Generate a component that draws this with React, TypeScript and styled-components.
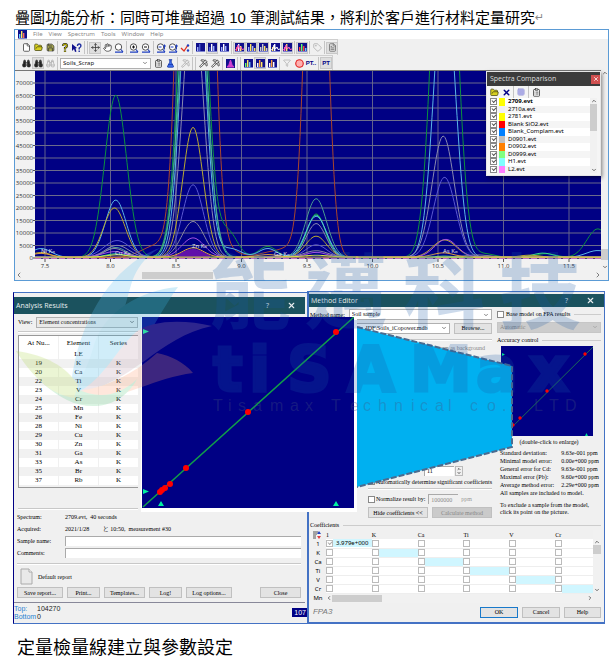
import React from "react";
import styled, { createGlobalStyle, css } from "styled-components";
import {
  File, FolderOpen, Save, Move, Hand, Binoculars,
  FlaskConical, FileText, Pickaxe, X, ChevronDown, ChevronUp,
  ChevronLeft, ChevronRight, ClipboardList, Filter, Ban, Tag, Grid3x3,
} from "lucide-react";

const NAVY = "#000084";
const UI = '"Noto Sans", "Open Sans", sans-serif';
const SERIF = '"Liberation Serif", "Noto Sans CJK TC", serif';
const CJK = '"Noto Sans CJK TC", sans-serif';

const GlobalStyle = createGlobalStyle`
  * { box-sizing: border-box; }
  body { margin: 0; background: #fff; color: #000; font-family: ${UI}; }
  button, input, select { font: inherit; color: inherit; margin: 0; }
  svg { display: block; flex: none; }
`;

const Page = styled.main`
  position: relative;
  overflow: hidden;
`;

const Heading = styled.h1`
  display: flex;
  height: 29px;
  margin: 0;
  padding: 8px 0 0 15px;
  font: 400 15px/20px "Liberation Sans", ${CJK};
  white-space: nowrap;
`;

const Return = styled.span`
  color: #888;
  font: 11px/20px "DejaVu Sans", sans-serif;
`;

const Caption = styled.p`
  margin: 0;
  padding: 11px 0 3px 17px;
  font: 400 18px/26px "Liberation Sans", ${CJK};
  white-space: nowrap;
`;

/* ---------- spectrum window ---------- */

const SpectrumWindow = styled.section`
  position: relative;
  margin: 0 5px 0 14px;
  border: 1px solid #5b9bd5;
  background: #f0f0f0;
`;

const MenuBar = styled.nav`
  display: flex;
  align-items: center;
  gap: 6px;
  height: 9px;
  padding-left: 3px;
  background: #fff;
`;

const MenuItem = styled.a`
  color: #888;
  font-size: 6px;
  line-height: 9px;
  text-decoration: none;
`;

const Toolbar = styled.div<{ $tall?: boolean; $end: number }>`
  display: flex;
  align-items: center;
  height: ${(p) => (p.$tall ? 16 : 15)}px;
  width: ${(p) => p.$end}px;
  padding-left: 5px;
  border: solid #cfcfcf;
  border-width: 1px 1px 0 0;
`;

const Tool = styled.button<{ $on?: boolean; $muted?: boolean }>`
  display: flex;
  align-items: center;
  justify-content: center;
  flex: none;
  width: 12px;
  height: 12px;
  padding: 0;
  border: 1px solid ${(p) => (p.$on ? "#c8c8c8" : "transparent")};
  background: ${(p) => (p.$on ? "#dedede" : "transparent")};
  color: ${(p) => (p.$muted ? "#aaa" : "#333")};
  font: 700 6px/8px "Liberation Sans", sans-serif;
`;

const Divider = styled.span<{ $double?: boolean }>`
  flex: none;
  width: ${(p) => (p.$double ? 4 : 1)}px;
  height: 13px;
  margin: 0 1px;
  border: solid #c4c4c4;
  border-width: 0 ${(p) => (p.$double ? 1 : 0)}px 0 1px;
`;

const Picker = styled.span<{ $disabled?: boolean; $grow?: boolean; $width?: number; $flat?: boolean }>`
  display: flex;
  align-items: center;
  ${(p) => (p.$grow ? "flex: 1;" : `flex: none; width: ${p.$width}px;`)}
  min-width: 0;
  height: 11px;
  padding: 0 2px;
  border: 1px solid ${(p) => (p.$disabled ? "#c6c6c6" : "#b0b0b0")};
  background: ${(p) => (p.$disabled ? "#cccccc" : p.$flat ? "#e9e9e9" : "#fff")};
  color: ${(p) => (p.$disabled ? "#888" : "#111")};
`;

const ScrapPicker = styled(Picker)`
  margin: 0 1px;
  font-size: 6px;
`;

const Select = styled.select`
  appearance: none;
  flex: 1;
  min-width: 0;
  padding: 0;
  border: 0;
  background: transparent;
  line-height: 9px;
  opacity: 1;
`;

const ChartRow = styled.div`
  display: flex;
`;

const ChartArea = styled.div`
  flex: 1;
  svg { width: 100%; height: auto; }
`;

const Scrollbar = styled.div<{ $dir: "v" | "h"; $size?: number }>`
  display: flex;
  flex-direction: ${(p) => (p.$dir === "v" ? "column" : "row")};
  align-items: center;
  justify-content: space-between;
  flex: none;
  background: #f1f1f1;
  color: #444;
  ${(p) => (p.$dir === "v" ? `width: ${p.$size ?? 7}px;` : `height: ${p.$size ?? 10}px;`)}
`;

const Thumb = styled.span<{ $before: number; $length: number; $dir: "v" | "h" }>`
  background: #cdcdcd;
  ${(p) =>
    p.$dir === "v"
      ? css`width: 100%; height: ${p.$length}px; margin: ${p.$before}px 0 auto;`
      : css`height: 7px; width: ${p.$length}px; margin: 0 auto 0 ${p.$before}px;`}
`;

/* ---------- comparison palette ---------- */

const Palette = styled.aside`
  position: absolute;
  top: 41px;
  right: 7px;
  width: 115px;
  padding-bottom: 2px;
  border: 1px solid #e6e6e6;
  background: #f5f5f5;
  box-shadow: 1px 2px 4px rgba(0, 0, 0, 0.5);
`;

const PaletteTitle = styled.header`
  display: flex;
  align-items: center;
  justify-content: space-between;
  height: 14px;
  padding-left: 3px;
  background: #3b3b3b;
  color: #ddd;
  font: 7px/12px "Open Sans", sans-serif;
`;

const CloseButton = styled.button`
  display: grid;
  place-items: center;
  width: 9px;
  height: 9px;
  padding: 0;
  border: 0;
  background: #d05050;
  color: #fff;
`;

const PaletteTools = styled.div`
  display: flex;
  align-items: center;
  height: 12px;
  padding-left: 1px;
`;

const PaletteBody = styled.div`
  display: flex;
  height: 75px;
  padding: 0 3px;
`;

const PaletteList = styled.ul`
  display: grid;
  grid-auto-rows: 1fr;
  flex: 1;
  margin: 0;
  padding: 0;
  list-style: none;
`;

const PaletteItem = styled.li<{ $bold?: boolean }>`
  label {
    display: flex;
    align-items: center;
    gap: 2px;
    height: 100%;
    font-size: 6px;
    line-height: 7px;
    font-weight: ${(p) => (p.$bold ? 700 : 400)};
  }
  &:nth-child(odd) { background: #fff; }
`;

const Swatch = styled.span<{ $color: string }>`
  width: 6px;
  height: 100%;
  margin-right: 1px;
  background: ${(p) => p.$color};
`;

const CheckBox = styled.input.attrs({ type: "checkbox" })<{ $pale?: boolean }>`
  appearance: none;
  position: relative;
  flex: none;
  width: 7px;
  height: 7px;
  border: 1px solid ${(p) => (p.$pale ? "#bbb" : "#888")};
  background: #fff;
  &:checked::after {
    content: "";
    position: absolute;
    left: 1px;
    top: 0;
    width: 3px;
    height: 2px;
    border: solid ${(p) => (p.$pale ? "#aaa" : "#555")};
    border-width: 0 0 1px 1px;
    transform: rotate(-45deg);
  }
`;

/* ---------- dialogs ---------- */

const Figure = styled.section`
  position: relative;
  display: grid;
  grid-template-columns: 1fr 1fr;
  margin: 10px 9px 0 13px;
  font: 6px/8px ${SERIF};
`;

const LeftShot = styled.div`
  display: flex;
  flex-direction: column;
  margin-top: 1px;
  padding-top: 4px;
  border: solid #4472c4;
  border-width: 1px 0 1px 0;
  border-left: 1px solid ${NAVY};
  background: #f0f0f0;
`;

const TitleBar = styled.header<{ $height: number }>`
  display: flex;
  align-items: center;
  gap: 18px;
  height: ${(p) => p.$height}px;
  padding: 0 9px 0 2px;
  background: #1b525e;
  color: #e8eef0;
  font: 7px/12px "Open Sans", sans-serif;
`;

const DialogName = styled.span`
  flex: 1;
`;

const TitleButton = styled.button`
  display: grid;
  place-items: center;
  padding: 0;
  border: 0;
  background: none;
`;

const ResultsDialog = styled.div`
  margin-right: 2px;
  padding-bottom: 4px;
  border-bottom: 1px solid #889;
  background: #f0f0f0;
`;

const ResultsTop = styled.div`
  width: 124px;
  padding: 2px 0 0 4px;
`;

const Field = styled.div<{ $height: number; $gap?: number }>`
  display: flex;
  align-items: center;
  gap: ${(p) => p.$gap ?? 4}px;
  height: ${(p) => p.$height}px;
  white-space: nowrap;
`;

const Rule = styled.hr<{ $top: number; $bottom: number }>`
  height: 2px;
  margin: ${(p) => p.$top}px 0 ${(p) => p.$bottom}px;
  border: 0;
  border-top: 1px solid #c8c8c8;
  border-bottom: 1px solid #fff;
`;

const TableFrame = styled.div`
  height: 153px;
  overflow: hidden;
  border: 1px solid #999;
  border-right: 0;
  background: #fff;
`;

const ElementTable = styled.table`
  width: 100%;
  table-layout: fixed;
  border-collapse: collapse;
  font-size: 7px;
  line-height: 9px;
  text-align: center;
  th { height: 14px; padding: 0; font-weight: 400; }
  td { height: 9px; padding: 0; }
  th + th, td + td { border-left: 1px solid #f0f0f0; }
  tbody tr:nth-child(even) { background: #f1f1f1; }
`;

const ResultsBottom = styled.div`
  padding: 0 4px 0 3px;
`;

const FieldLabel = styled.label`
  width: 44px;
`;

const TextBox = styled.input<{ $width?: number; $muted?: boolean }>`
  ${(p) => (p.$width ? `width: ${p.$width}px;` : "flex: 1;")}
  min-width: 0;
  height: 10px;
  padding: 0 2px;
  border: solid #aaa;
  border-width: 1px 0 0 1px;
  background: ${(p) => (p.$muted ? "#f0f0f0" : "#fff")};
  color: ${(p) => (p.$muted ? "#888" : "#000")};
`;

const PushButton = styled.button<{ $width: number; $primary?: boolean; $off?: boolean }>`
  width: ${(p) => p.$width}px;
  height: 11px;
  padding: 0;
  border: 1px solid ${(p) => (p.$primary ? "#1979ca" : "#c0c0c0")};
  background: ${(p) => (p.$off ? "#cacaca" : "#e3e3e3")};
  color: ${(p) => (p.$off ? "#888" : "#000")};
  line-height: 8px;
`;

const Spacer = styled.span`
  flex: 1;
`;

const StatusStrip = styled.footer`
  display: flex;
  align-items: center;
  justify-content: space-between;
  flex: 1;
  color: #222;
  font: 7px/8px "Liberation Sans", sans-serif;
  dl { display: grid; grid-template-columns: 23px auto; margin: 0; }
  dt { color: #2a7fd0; }
  dd { margin: 0; }
`;

const Chip = styled.span`
  padding: 1px 1px 0 2px;
  background: ${NAVY};
  color: #fff;
`;

const EditorDialog = styled.div`
  padding-top: 2px;
  border: solid #4472c4;
  border-width: 1px 1px 2px 2px;
  background: #f0f0f0;
`;

const EditorColumns = styled.div`
  display: grid;
  grid-template-columns: 1fr 104px;
  gap: 5px;
  padding: 2px 3px 0 1px;
`;

const SideColumn = styled.div`
  padding-top: 1px;
`;

const Legend = styled.div`
  display: flex;
  align-items: center;
  gap: 2px;
  height: 8px;
  white-space: nowrap;
  &::after { content: ""; flex: 1; margin-left: 2px; border-top: 1px solid #ccc; }
`;

const CoveredArea = styled.div`
  height: 124px;
  padding: 3px 7px 0 0;
  color: #888;
  text-align: right;
`;

const Indented = styled.div`
  padding-left: 58px;
`;

const Spin = styled.div`
  display: grid;
  width: 8px;
  height: 10px;
  border: 1px solid #bbb;
  place-items: center;
`;

const AccuracyPlot = styled.div`
  margin: 2px 8px 0 4px;
  svg { width: 100%; height: auto; }
`;

const Centered = styled.p`
  margin: 2px 0 3px;
  text-align: center;
`;

const Stats = styled.table`
  width: 100%;
  margin-left: 3px;
  border-collapse: collapse;
  white-space: nowrap;
  td, th { height: 8px; padding: 0; font-weight: 400; text-align: left; }
`;

const Hint = styled.p`
  margin: 5px 0 0 3px;
  line-height: 7px;
  white-space: nowrap;
`;

const CoefficientPanel = styled.div`
  padding: 1px 3px 0 1px;
`;

const MatrixRow = styled.div`
  display: flex;
  align-items: flex-start;
  margin-top: 1px;
`;

const MatrixFrame = styled.div`
  flex: 1;
  overflow: hidden;
`;

const Matrix = styled.table`
  width: calc(100% + 8px);
  table-layout: fixed;
  border-collapse: collapse;
  th { height: 9px; padding: 0; font-weight: 400; text-align: left; }
  th:first-child { width: 16px; text-align: center; font-family: ${UI}; }
  td { height: 9px; padding: 0; background: #fff; border-bottom: 1px solid #eee; }
  label { display: flex; align-items: center; height: 8px; white-space: nowrap; }
  tbody th { line-height: 8px; }
`;

const MatrixScrollbar = styled(Scrollbar)`
  height: 63px;
  padding-top: 9px;
`;

const MatrixScroll = styled.div`
  position: relative;
  margin-top: -9px;
  padding: 0 8px 0 16px;
`;

const Value = styled.span<{ $on?: boolean }>`
  flex: 1;
  height: 8px;
  padding-left: 3px;
  background: ${(p) => (p.$on ? "#d0f6ff" : "transparent")};
  font: 6px/8px ${UI};
`;

const EditorFooter = styled.footer`
  display: flex;
  align-items: center;
  gap: 4px;
  padding: 4px 3px 4px 4px;
`;

const Brand = styled.em`
  flex: 1;
  color: #777;
  font: italic 8px/10px "Liberation Sans", sans-serif;
`;

const TextGap = styled.span`
  width: 28px;
`;

const Muted = styled.span`
  color: #999;
`;

const InlineLabel = styled.label`
  display: flex;
  gap: 1px;
  align-items: center;
`;

const MainScrollEnd = styled.span`
  width: 6px;
`;

const TintedText = styled.span`
  color: ${NAVY};
`;

const ZoomedPlot = styled.div`
  position: absolute;
  left: 128px;
  top: 26px;
  border: solid #fff;
  border-width: 0 3px 4px 1px;
`;

const ZoomBeam = styled.div`
  position: absolute;
  left: 344px;
  top: 34px;
`;

const Watermark = styled.div`
  position: absolute;
  left: 0;
  top: 240px;
  pointer-events: none;
`;

/* ---------- toolbar glyphs ---------- */

const Glyph = ({ bars, line }: { bars: string[]; line?: string }) => (
  <svg width="9" height="9" viewBox="0 0 9 9">
    <rect width="9" height="9" fill="#10108c" />
    {bars.map((c, i) => (
      <rect key={i} x={1 + i * 2} y={[4, 1, 3, 5][i]} width="1.400" height={[4, 7, 5, 3][i]} fill={c} />
    ))}
    {line && <path d="M0 7 L2 6 L3 2 L4.500 6 L6 4 L7 6.500 L9 6" fill="none" stroke={line} />}
    <path d="M0 8.500h9" stroke="#c8d4ff" strokeWidth="0.600" />
  </svg>
);

const HelpMark = ({ arrow }: { arrow?: boolean }) => (
  <svg width="10" height="10" viewBox="0 0 10 10">
    {arrow && <path d="M0 1 L0 8 L2 6 L3 9 L4.500 8.500 L3.500 5.500 L5 5 Z" fill="#10108c" />}
    <path
      d={arrow ? "M5.500 3 q0-2 1.700-2 t1.700 2 q0 1-1.700 2 v1.500 M7.200 7.500 v1.500" : "M3 3 q0-2 2-2 t2 2 q0 1-2 2 v1.500 M5 7.500 v1.500"}
      fill="none" stroke={arrow ? "#2030a0" : "#222"} strokeWidth={arrow ? 1.4 : 2.2}
    />
    {!arrow && <path d="M3 3 q0-2 2-2 t2 2 q0 1-2 2 v1.500 M5 7.500 v1.500" fill="none" stroke="#d8d000" />}
  </svg>
);

const OpenFolder = () => <FolderOpen size={9} color="#444410" fill="#d8d020" strokeWidth={2} />;

const Lens = ({ mark }: { mark?: "in" | "out" | "wave" }) => (
  <svg width="10" height="10" viewBox="0 0 10 10">
    <circle cx="4.500" cy="4" r="3.200" fill="#fff" stroke="#555" />
    {mark && mark !== "wave" && <path d={mark === "in" ? "M3 4h3M4.500 2.500v3" : "M3 4h3"} stroke="#111" />}
    {mark === "wave" && <path d="M2.500 4h3M7 3h3M8.500 1.500v5" stroke="#2040c0" />}
    <path d="M7 6.500 L9 9 M1 9.200 h8" stroke="#2040c0" strokeWidth="1.200" />
  </svg>
);

const MagentaPeak = () => (
  <svg width="9" height="9" viewBox="0 0 9 9">
    <rect width="9" height="9" fill="#10108c" />
    <path d="M1 8 Q3 7 4.500 1 Q6 7 8 8Z" fill="#d040d0" stroke="#d040d0" />
  </svg>
);

const RedCheck = () => (
  <svg width="10" height="10" viewBox="0 0 10 10">
    <path d="M1 5 L4 8 L8 2" fill="none" stroke="#e03020" strokeWidth="1.300" />
    <circle cx="8" cy="2.500" r="1.200" fill="#2040c0" />
    <circle cx="8" cy="7.500" r="1.200" fill="#2040c0" />
  </svg>
);

type ToolSpec = { name: string; icon: React.ReactNode; on?: boolean; muted?: boolean } | "|" | "||";

const row1: ToolSpec[] = [
  { name: "New", icon: <File size={9} fill="#fff" /> },
  { name: "Open", icon: <OpenFolder /> },
  { name: "Save", icon: <Save size={9} fill="#a8a850" /> }, "|",
  { name: "Help", icon: <HelpMark /> },
  { name: "Context help", icon: <HelpMark arrow /> }, "||",
  { name: "Cursor", icon: <Move size={9} />, on: true },
  { name: "Pan", icon: <Hand size={9} fill="#fff" /> },
  { name: "Zoom", icon: <Lens /> }, "|",
  { name: "Zoom in", icon: <Lens mark="in" /> },
  { name: "Zoom out", icon: <Lens mark="out" /> }, "|",
  { name: "Stretch", icon: <Lens mark="wave" /> },
  { name: "Shrink", icon: <Lens mark="wave" /> },
  { name: "Fit", icon: <RedCheck /> }, "|",
  { name: "Linear", icon: <Glyph bars={["#9fb0ff", "#5060d0"]} /> },
  { name: "Square root", icon: <Glyph bars={["#5060d0", "#fff", "#9fb0ff"]} />, on: true },
  { name: "Logarithm", icon: <Glyph bars={["#9fb0ff", "#fff", "#9fb0ff"]} /> }, "|",
  { name: "Fill", icon: <Glyph bars={["#f44", "#fff", "#ffe860"]} line="#ff60c0" />, on: true },
  { name: "Peaks", icon: <Glyph bars={["#9fb0ff", "#ffe860", "#9fb0ff", "#ffe860"]} />, on: true },
  { name: "Grid", icon: <Glyph bars={["#ccc", "#ccc", "#ffe860", "#ccc"]} />, on: true },
  { name: "Labels", icon: <Glyph bars={["#ffe860", "#fff"]} line="#fff" /> },
  { name: "Overlay", icon: <Glyph bars={["#ff60c0", "#ffe860"]} line="#ff60c0" />, on: true }, "|",
  { name: "Compare", icon: <Glyph bars={["#f44", "#6f6", "#f44", "#6cf"]} />, on: true }, "|",
  { name: "Tag", icon: <Tag size={9} />, muted: true }, "|",
  { name: "Report", icon: <FileText size={9} color="#666" />, on: true },
];

const row2Left: ToolSpec[] = [
  { name: "Find", icon: <Binoculars size={9} fill="#222" /> },
  { name: "Find next", icon: <Binoculars size={9} fill="#222" />, on: true },
  { name: "Find off", icon: <Binoculars size={9} />, muted: true }, "|",
];

const row2Right: ToolSpec[] = [
  { name: "Properties", icon: <ClipboardList size={9} /> },
  { name: "Analyse", icon: <FlaskConical size={9} color="#1030a0" fill="#4070f0" /> }, "|",
  { name: "Stop", icon: <Pickaxe size={9} />, muted: true }, "||",
  { name: "Calibrate", icon: <Pickaxe size={9} /> },
  { name: "Recalibrate", icon: <Pickaxe size={9} /> }, "|",
  { name: "Peak", icon: <MagentaPeak /> }, "||",
  { name: "Series K", icon: <Glyph bars={["#6f6", "#ffe860", "#6cf"]} /> },
  { name: "Series L", icon: <Glyph bars={["#fff", "#ffa040", "#ffe860"]} />, on: true },
  { name: "Series M", icon: <Glyph bars={["#fff", "#ffa040", "#fff"]} /> }, "|",
  { name: "Filter", icon: <Filter size={8} />, muted: true },
  { name: "Exclude", icon: <Ban size={9} color="#e02020" fill="#ffb0b0" strokeWidth={3} /> },
  { name: "Periodic table", icon: <TintedText>PT..</TintedText> }, "|",
  { name: "Pin table", icon: <TintedText>PT</TintedText>, on: true },
];

const Tools = ({ items }: { items: ToolSpec[] }) => (
  <>
    {items.map((t, i) =>
      typeof t === "string" ? (
        <Divider key={i} $double={t === "||"} />
      ) : (
        <Tool key={i} type="button" aria-label={t.name} $on={t.on} $muted={t.muted}>
          {t.icon}
        </Tool>
      )
    )}
  </>
);

/* ---------- spectrum chart ---------- */

type Peak = [number, number, number];
const px = (e: number) => 30 + (e - 7.5) * 131;
const py = (v: number) => 188 - v / 400;

const curves: { color: string; peaks: Peak[] }[] = [
  { color: "#a8452c", peaks: [[8.65, 490000, 0.085], [8.36, 5000, 0.12], [8.9, 2500, 0.1], [9.2, 1800, 0.08], [9.36, 3500, 0.08], [9.57, 220000, 0.07]] },
  { color: "#0c9040", peaks: [[8.04, 65000, 0.083], [8.63, 190000, 0.087], [8.9, 10000, 0.07], [9.2, 4500, 0.07], [9.57, 17500, 0.07], [10.55, 185000, 0.085], [10.86, 1500, 0.08], [11.32, 1600, 0.08], [11.72, 11500, 0.085]] },
  { color: "#3cd890", peaks: [[8.63, 165000, 0.085], [8.04, 1500, 0.08], [9.57, 17000, 0.075], [10.55, 600, 0.08], [11.3, 1800, 0.08]] },
  { color: "#5ab4e6", peaks: [[7.47, 3600, 0.08], [8.04, 23000, 0.08], [8.63, 150000, 0.08], [8.92, 3500, 0.08], [9.2, 3600, 0.07], [9.57, 16500, 0.08], [10.55, 115000, 0.08], [11.72, 2800, 0.09]] },
  { color: "#4a9c90", peaks: [[8.63, 135000, 0.09], [8.04, 4000, 0.08], [9.57, 23500, 0.08]] },
  { color: "#b8a830", peaks: [[7.47, 2000, 0.07], [8.03, 19800, 0.083], [8.63, 52000, 0.078], [9.57, 8500, 0.08], [10.55, 7000, 0.09], [11.2, 900, 0.08]] },
  { color: "#8888b0", peaks: [[8.05, 4800, 0.09], [8.63, 105000, 0.078], [9.57, 13500, 0.075], [10.54, 48500, 0.085]] },
  { color: "#5a58d0", peaks: [[8.05, 6700, 0.1], [8.63, 29000, 0.08], [9.57, 5000, 0.08], [10.55, 32000, 0.085]] },
  { color: "#8a88a0", peaks: [[8.03, 3500, 0.08], [8.63, 14300, 0.085], [9.57, 2600, 0.09], [10.8, 900, 0.1]] },
  { color: "#a050e0", peaks: [[8.03, 2200, 0.09], [8.63, 7700, 0.085], [9.57, 1900, 0.08], [10.56, 7100, 0.085]] },
  { color: "#e0a040", peaks: [[7.47, 1500, 0.07], [8.63, 3700, 0.08], [9.2, 1000, 0.08], [10.54, 1700, 0.08]] },
  { color: "#d8e840", peaks: [[8.05, 900, 0.08], [9.57, 700, 0.1]] },
];

const trace = (peaks: Peak[], base: number) => {
  const pts: string[] = [];
  for (let x = 20; x <= 586; x += 1) {
    const e = 7.5 + (x - 30) / 131;
    const v = peaks.reduce((s, [c, h, w]) => s + h * Math.exp(-((e - c) ** 2) / (2 * w * w)), base);
    pts.push(`${x},${Math.max(-40, py(v)).toFixed(1)}`);
  }
  return pts.join(" ");
};

const yTicks = Array.from({ length: 15 }, (_, i) => i * 5000);
const xTicks = [7.5, 8, 8.5, 9, 9.5, 10, 10.5, 11, 11.5];

const SpectrumChart = () => (
  <svg viewBox="0 0 586 200" role="img" aria-label="Overlaid spectra">
    <clipPath id="plot"><rect x="20" y="1" width="566" height="188" /></clipPath>
    <rect width="586" height="200" fill="#f2f2f2" />
    <path d="M0 0.500h586" stroke="#777" />
    <rect x="20" y="1" width="566" height="188" fill={NAVY} />
    <g fontFamily="Open Sans" fontSize="6" fill="#333">
      {yTicks.map((v) => (
        <g key={v}>
          <path d={`M20 ${py(v)}H586`} stroke="#77778c" strokeWidth="0.900" />
          <path d={`M18 ${py(v)}H20`} stroke="#555" />
          <text x="18" y={py(v) + 2} textAnchor="end">{v}</text>
        </g>
      ))}
      {xTicks.map((v) => (
        <g key={v}>
          <path d={`M${px(v)} 1V189`} stroke="#6c6c8c" strokeWidth="0.900" />
          <path d={`M${px(v)} 189v3`} stroke="#555" />
          <text x={px(v)} y="198" textAnchor="middle">{v.toFixed(1)}</text>
        </g>
      ))}
    </g>
    <g clipPath="url(#plot)" fill="none">
      {Array.from({ length: 18 }, (_, i) => {
        const x = 160 + i * 2;
        const h = 9 * Math.exp(-((x - 178) ** 2) / 260);
        return <path key={i} d={`M${x} 188V${188 - h}`} stroke="#c020d0" />;
      })}
      {curves.map((c, i) => (
        <polyline key={i} points={trace(c.peaks, 100 + i * 25)} stroke={c.color} strokeWidth="1" />
      ))}
      <path d="M20 188.500H586" stroke="#c070c0" strokeDasharray="6 2" />
    </g>
    <g fontFamily="Open Sans" fontSize="6" fill="#eee">
      <text x="26" y="183">Ni K<tspan fontSize="4">α</tspan></text>
      <text x="100" y="185">Cu K<tspan fontSize="4">α</tspan></text>
      <text x="177" y="178">Zn K<tspan fontSize="4">α</tspan></text>
      <text x="259" y="186">Ga K<tspan fontSize="4">α</tspan></text>
      <text x="428" y="183">As K<tspan fontSize="4">α</tspan></text>
    </g>
  </svg>
);

const files: [string, string][] = [
  ["2709.evt", "#ffff00"], ["2710a.evt", "#f0f0f0"], ["2781.evt", "#ffff00"],
  ["Blank SiO2.evt", "#ff0000"], ["Blank_Complam.evt", "#0080ff"], ["D0901.evt", "#c0c0c0"],
  ["D0902.evt", "#ff8000"], ["D0999.evt", "#80ff80"], ["H1.evt", "#80ffff"], ["L2.evt", "#ff80ff"],
];

const ComparisonPalette = () => (
  <Palette>
    <PaletteTitle>
      Spectra Comparison
      <CloseButton type="button" aria-label="Close"><X size={6} strokeWidth={3} /></CloseButton>
    </PaletteTitle>
    <PaletteTools>
      <Tool type="button" aria-label="Open"><OpenFolder /></Tool>
      <Tool type="button" aria-label="Remove"><X size={9} color={NAVY} strokeWidth={4} /></Tool>
      <Divider />
      <Tool type="button" aria-label="Table"><Grid3x3 size={8} color="#8888d0" fill="#d8d8ff" /></Tool>
      <Divider />
      <Tool type="button" aria-label="Properties"><ClipboardList size={9} /></Tool>
    </PaletteTools>
    <PaletteBody>
      <PaletteList>
        {files.map(([name, color], i) => (
          <PaletteItem key={name} $bold={i === 0}>
            <label><CheckBox defaultChecked /><Swatch $color={color} />{name}</label>
          </PaletteItem>
        ))}
      </PaletteList>
      <Scrollbar $dir="v">
        <ChevronUp size={6} strokeWidth={3} />
        <Thumb $dir="v" $before={0} $length={27} />
        <ChevronDown size={6} strokeWidth={3} />
      </Scrollbar>
    </PaletteBody>
  </Palette>
);

/* ---------- analysis results ---------- */

const elements: [string, string, string][] = [
  ["", "LE", ""], ["19", "K", "K"], ["20", "Ca", "K"], ["22", "Ti", "K"], ["23", "V", "K"],
  ["24", "Cr", "K"], ["25", "Mn", "K"], ["26", "Fe", "K"], ["28", "Ni", "K"], ["29", "Cu", "K"],
  ["30", "Zn", "K"], ["31", "Ga", "K"], ["33", "As", "K"], ["35", "Br", "K"], ["37", "Rb", "K"],
  ["38", "Sr", "K"],
];

const AnalysisResults = () => (
  <LeftShot>
    <ResultsDialog>
      <TitleBar $height={17}>
        <DialogName>Analysis Results</DialogName>
        <TitleButton type="button" aria-label="Help">?</TitleButton>
        <TitleButton type="button" aria-label="Close"><X size={9} strokeWidth={3} /></TitleButton>
      </TitleBar>
      <ResultsTop>
        <Field $height={12}>
          <label htmlFor="view">View:</label>
          <Picker $grow $flat>
            <Select id="view"><option>Element concentrations</option></Select>
            <ChevronDown size={6} />
          </Picker>
        </Field>
        <Rule $top={3} $bottom={2} />
        <TableFrame>
          <ElementTable>
            <thead><tr><th>At Nu...</th><th>Element</th><th>Series</th></tr></thead>
            <tbody>
              {elements.map(([n, el, s]) => (
                <tr key={el}><td>{n}</td><td>{el}</td><td>{s}</td></tr>
              ))}
            </tbody>
          </ElementTable>
        </TableFrame>
        <Rule $top={20} $bottom={1} />
      </ResultsTop>
      <ResultsBottom>
        <Field $height={12}><FieldLabel as="span">Spectrum:</FieldLabel>2709.evt, &nbsp;40 seconds</Field>
        <Field $height={12}>
          <FieldLabel as="span">Acquired:</FieldLabel>
          <span>2021/1/28 &nbsp; &nbsp; &nbsp; &nbsp; と 10:50, &nbsp;measurement #30</span>
        </Field>
        <Field $height={12}><FieldLabel htmlFor="sample">Sample name:</FieldLabel><TextBox id="sample" /></Field>
        <Field $height={12}><FieldLabel htmlFor="comments">Comments:</FieldLabel><TextBox id="comments" /></Field>
        <Rule $top={4} $bottom={1} />
        <Field $height={21} $gap={4}>
          <svg width="17" height="17" viewBox="0 0 17 17">
            <path d="M4 1h8l3 3v12H4z" fill="#e9e9e9" stroke="#aaa" />
            <path d="M12 1v3h3" fill="#fff" stroke="#aaa" />
          </svg>
          Default report
        </Field>
        <Field $height={11} $gap={4}>
          <PushButton type="button" $width={46}>Save report...</PushButton>
          <PushButton type="button" $width={33}>Print...</PushButton>
          <PushButton type="button" $width={41}>Templates...</PushButton>
          <PushButton type="button" $width={33}>Log!</PushButton>
          <PushButton type="button" $width={46}>Log options...</PushButton>
          <Spacer />
          <PushButton type="button" $width={41}>Close</PushButton>
        </Field>
      </ResultsBottom>
    </ResultsDialog>
    <StatusStrip>
      <dl><dt>Top:</dt><dd>104270</dd><dt>Bottom</dt><dd>0</dd></dl>
      <Chip>107</Chip>
    </StatusStrip>
  </LeftShot>
);

/* ---------- method editor ---------- */

const stats: [string, string][] = [
  ["Standard deviation:", "9.63e-001 ppm"], ["Minimal model error:", "0.00e+000 ppm"],
  ["General error for Cd:", "9.63e-001 ppm"], ["Maximal error (Pb):", "9.60e+000 ppm"],
  ["Average method error:", "2.29e+000 ppm"],
];

const matrixColumns = ["1", "K", "Ca", "Ti", "V", "Cr"];
const matrixRows = [...matrixColumns, "Mn"];

const MethodEditor = () => (
  <EditorDialog>
    <TitleBar $height={13}>
      <DialogName>Method Editor</DialogName>
      <TitleButton type="button" aria-label="Help">?</TitleButton>
      <TitleButton type="button" aria-label="Close"><X size={9} strokeWidth={3} /></TitleButton>
    </TitleBar>
    <EditorColumns>
      <div>
        <Field $height={11}>
          <label htmlFor="method">Method name:</label>
          <Picker $grow>
            <Select id="method"><option>Soil sample</option></Select>
            <ChevronDown size={6} />
          </Picker>
        </Field>
        <Field $height={16}>
          <Spacer />
          <Picker $width={96}>
            <Select aria-label="Database"><option>its_IDF\Soils_iCopower.mdb</option></Select>
            <ChevronDown size={6} />
          </Picker>
          <PushButton type="button" $width={38}>Browse...</PushButton>
        </Field>
        <Rule $top={3} $bottom={0} />
        <CoveredArea>Use spectrum as background</CoveredArea>
        <Field $height={11} $gap={1}>
          <Spacer />
          <TextBox $width={30} aria-label="Order" defaultValue="11" />
          <Spin><ChevronUp size={4} strokeWidth={4} /><ChevronDown size={4} strokeWidth={4} /></Spin>
          <TextGap />
        </Field>
        <Indented>
          <Field as="label" $height={11} $gap={1}>
            <CheckBox defaultChecked />Automatically determine significant coefficients
          </Field>
          <Rule $top={1} $bottom={3} />
          <Field $height={12} $gap={3}>
            <InlineLabel><CheckBox />Normalize result by:</InlineLabel>
            <TextBox $width={30} $muted aria-label="Normalize value" defaultValue="1000000" />
            <Muted>ppm</Muted>
          </Field>
          <Field $height={15}>
            <PushButton type="button" $width={60}>Hide coefficients &lt;&lt;</PushButton>
            <PushButton type="button" $width={60} $off>Calculate method</PushButton>
          </Field>
        </Indented>
      </div>
      <SideColumn>
        <Legend as="label"><CheckBox />Base model on FPA results</Legend>
        <Field $height={18}>
          <Picker $grow $disabled>
            <Select aria-label="Mode"><option>Automatic</option></Select>
            <ChevronDown size={6} />
          </Picker>
        </Field>
        <Legend>Accuracy control</Legend>
        <AccuracyPlot>
          <svg viewBox="0 0 92 90">
            <rect width="92" height="90" fill={NAVY} />
            <path d="M2 90L92 1" stroke="#1a6a58" />
            {[[84, 8], [46, 45], [19, 72], [12, 79], [10, 81]].map(([x, y]) => (
              <circle key={x} cx={x} cy={y} r="1.700" fill="#f00" />
            ))}
            <path d="M1 7l3 1.500-3 1.500zM84 90l1.500-3 1.500 3z" fill="#00e090" />
          </svg>
        </AccuracyPlot>
        <Centered>(double-click to enlarge)</Centered>
        <Stats>
          <tbody>
            {stats.map(([k, v]) => <tr key={k}><th scope="row">{k}</th><td>{v}</td></tr>)}
            <tr><td colSpan={2}>All samples are included to model.</td></tr>
          </tbody>
        </Stats>
        <Hint>To exclude a sample from the model,<br />click its point on the picture.</Hint>
      </SideColumn>
    </EditorColumns>
    <CoefficientPanel>
      <Legend>Coefficients</Legend>
      <MatrixRow>
        <MatrixFrame>
          <Matrix>
            <thead>
              <tr>
                <th aria-label="Sort">
                  <svg width="12" height="8" viewBox="0 0 12 8">
                    <path d="M3 1h5M3 3h4M3 5h3M3 7h3" stroke="#555" />
                    <path d="M9 0l2 3H7z" fill="#2040c0" />
                    <path d="M9 8l2-3H7z" fill="#e04040" />
                  </svg>
                </th>
                {matrixColumns.map((c) => <th key={c} scope="col">{c}</th>)}
              </tr>
            </thead>
            <tbody>
              {matrixRows.map((r, i) => (
                <tr key={r}>
                  <th scope="row">{r}</th>
                  {matrixColumns.map((c, j) => (
                    <td key={c}>
                      <label>
                        <CheckBox $pale defaultChecked={i === 0 && j === 0} aria-label={`${r} × ${c}`} />
                        <Value $on={i === j}>{i === 0 && j === 0 ? "3.979e+000" : ""}</Value>
                      </label>
                    </td>
                  ))}
                </tr>
              ))}
            </tbody>
          </Matrix>
        </MatrixFrame>
        <MatrixScrollbar $dir="v" $size={8}>
          <ChevronUp size={6} strokeWidth={3} />
          <Thumb $dir="v" $before={0} $length={9} />
          <ChevronDown size={6} strokeWidth={3} />
        </MatrixScrollbar>
      </MatrixRow>
      <MatrixScroll>
        <Scrollbar $dir="h" $size={9}>
          <ChevronLeft size={6} strokeWidth={3} />
          <Thumb $dir="h" $before={0} $length={50} />
          <ChevronRight size={6} strokeWidth={3} />
        </Scrollbar>
      </MatrixScroll>
    </CoefficientPanel>
    <EditorFooter>
      <Brand>FPA3</Brand>
      <PushButton type="button" $width={38} $primary>OK</PushButton>
      <PushButton type="button" $width={38}>Cancel</PushButton>
      <PushButton type="button" $width={37}>Help</PushButton>
    </EditorFooter>
  </EditorDialog>
);

/* ---------- logo ---------- */

const CompanyLogo = () => (
  <svg width="614" height="180" viewBox="0 240 614 180" aria-label="Tisamax">
    <g opacity="0.240">
      <path d="M160 248 C118 262 78 315 71 386 L83 393 C112 360 121 320 131 285 C136 268 146 256 160 248Z" fill="#5ac0f4" />
      <path d="M178 287 C140 290 104 312 94 345 C88 366 82 380 71 386 L82 394 C130 385 150 325 178 287Z" fill="#40b8e8" />
      <path d="M212 326 C184 319 151 320 136 332 C116 350 104 378 80 391 C132 385 158 337 212 326Z" fill="#c0a0b0" />
      <path d="M193 373 C184 362 171 356 157 353 C134 374 106 388 72 392 C110 410 145 379 193 373Z" fill="#ffa070" />
      <path d="M16 351 C42 362 62 376 75 388 C98 400 120 396 137 379 C122 407 92 412 67 400 C42 387 30 370 16 351Z" fill="#68d088" />
      <path d="M16 351 C45 355 66 366 78 385 L74 398 C48 394 32 375 16 351Z" fill="#b0d850" />
    </g>
    <g fill="#1a5aa8" opacity="0.220">
      <text x="209 305 403 499" y="322" fontSize="82" fontWeight="700" fontFamily="Noto Sans CJK TC">能邁科技</text>
      <text
        x="213 249 287 347 410 476 529" y="391" fontSize="62" fontWeight="700"
        fontFamily="DejaVu Sans" stroke="#1a5aa8" strokeWidth="3"
      >tiSAMax</text>
    </g>
    <text
      x="213 228 238 253 270 290 305 318 331 350 363 378 394 411 420 435 448 458 470 487 502 510 518 534 549 565"
      y="411" fontSize="16" fillOpacity="0.320" fill="#405080" fontFamily="Liberation Sans"
    >Tisamax Technical co., LTD</text>
  </svg>
);

export default function App() {
  return (
    <Page>
      <GlobalStyle />
      <Heading>
        疊圖功能分析：同時可堆疊超過 10 筆測試結果，將利於客戶進行材料定量研究<Return>↵</Return>
      </Heading>
      <SpectrumWindow>
        <MenuBar>
          <Glyph bars={["#6cf", "#ffe860", "#f66"]} />
          {["File", "View", "Spectrum", "Tools", "Window", "Help"].map((m) => (
            <MenuItem key={m} href="#">{m}</MenuItem>
          ))}
        </MenuBar>
        <Toolbar $tall $end={323}><Tools items={row1} /></Toolbar>
        <Toolbar $end={318}>
          <Tools items={row2Left} />
          <ScrapPicker $width={91}>
            <Select aria-label="Method"><option>Soils_Scrap</option></Select>
            <ChevronDown size={6} />
          </ScrapPicker>
          <Tools items={row2Right} />
        </Toolbar>
        <ChartRow>
          <ChartArea><SpectrumChart /></ChartArea>
          <Scrollbar $dir="v">
            <ChevronUp size={6} strokeWidth={3} />
            <Thumb $dir="v" $before={173} $length={11} />
            <ChevronDown size={6} strokeWidth={3} />
          </Scrollbar>
        </ChartRow>
        <Scrollbar $dir="h">
          <ChevronLeft size={8} />
          <Thumb $dir="h" $before={119} $length={71} />
          <ChevronRight size={8} />
          <MainScrollEnd />
        </Scrollbar>
        <ComparisonPalette />
      </SpectrumWindow>
      <Figure>
        <AnalysisResults />
        <MethodEditor />
        <ZoomedPlot>
          <svg width="212" height="191" viewBox="0 0 212 191">
            <rect width="212" height="191" fill={NAVY} />
            <path d="M1 190L212 0" stroke="#10a048" strokeWidth="1.500" />
            {[[194, 15], [106, 95], [44, 151], [28, 167], [23, 171], [20, 173], [18, 175]].map(([x, y]) => (
              <circle key={x} cx={x} cy={y} r="3" fill="#f00" />
            ))}
            <path d="M1 12l6 2.500-6 2.500zM1 172l6 2.500-6 2.500zM16 189l3-5 3 5zM191 189l3-5 3 5z" fill="#00f0a0" />
          </svg>
        </ZoomedPlot>
        <ZoomBeam>
          <svg width="158" height="168" viewBox="0 0 158 168">
            <path d="M0 2L155 41V122L0 162Z" fill="#00b0f0" />
            <path d="M0 2L155 41V122L0 162" fill="none" stroke="#4a6c90" strokeWidth="2" strokeDasharray="6 2" />
          </svg>
        </ZoomBeam>
      </Figure>
      <Caption>定量檢量線建立與參數設定</Caption>
      <Watermark><CompanyLogo /></Watermark>
    </Page>
  );
}
